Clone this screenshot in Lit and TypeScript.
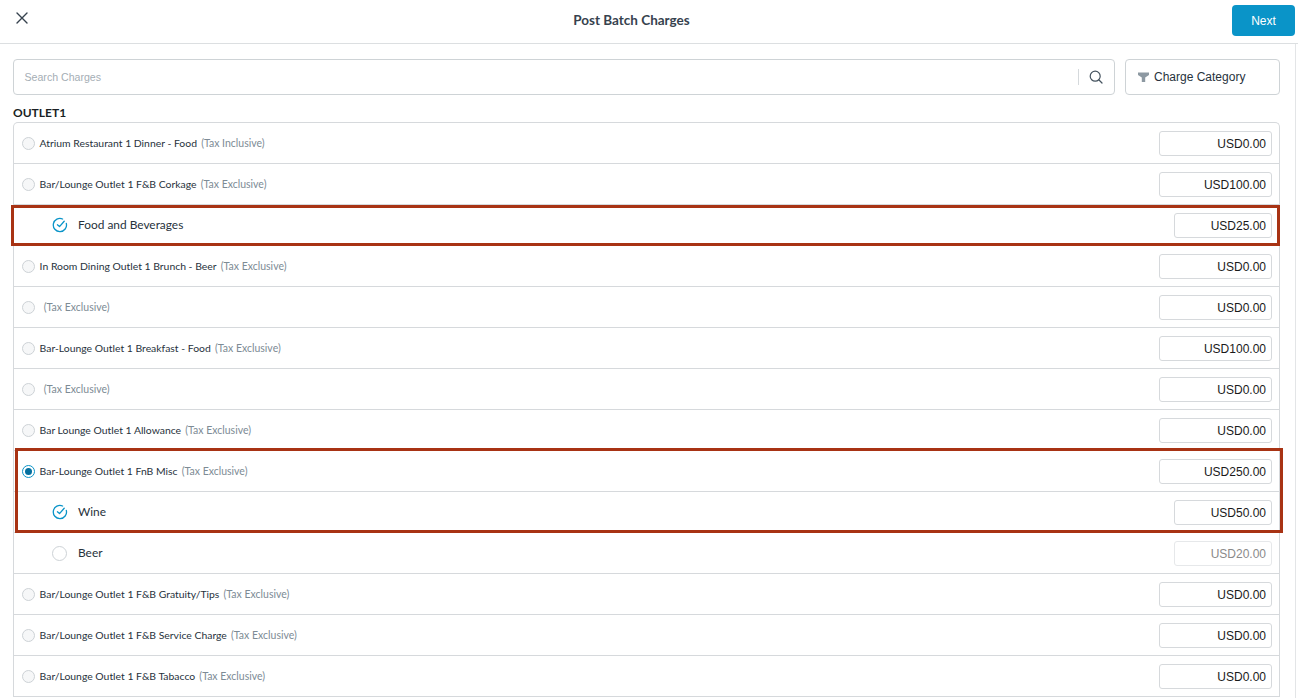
import { LitElement, html, css, svg } from "lit";
import { customElement } from "lit/decorators.js";

type Row = { name?: string; tax?: string; amt: string; kind: "main" | "sub"; state?: "on" | "check" | "off"; disabled?: boolean };
const EX = "(Tax Exclusive)";
const rows: Row[] = [
  { kind: "main", name: "Atrium Restaurant 1 Dinner - Food", tax: "(Tax Inclusive)", amt: "USD0.00" },
  { kind: "main", name: "Bar/Lounge Outlet 1 F&B Corkage", tax: EX, amt: "USD100.00" },
  { kind: "sub", name: "Food and Beverages", state: "check", amt: "USD25.00" },
  { kind: "main", name: "In Room Dining Outlet 1 Brunch - Beer", tax: EX, amt: "USD0.00" },
  { kind: "main", name: "", tax: EX, amt: "USD0.00" },
  { kind: "main", name: "Bar-Lounge Outlet 1 Breakfast - Food", tax: EX, amt: "USD100.00" },
  { kind: "main", name: "", tax: EX, amt: "USD0.00" },
  { kind: "main", name: "Bar Lounge Outlet 1 Allowance", tax: EX, amt: "USD0.00" },
  { kind: "main", name: "Bar-Lounge Outlet 1 FnB Misc", tax: EX, amt: "USD250.00", state: "on" },
  { kind: "sub", name: "Wine", state: "check", amt: "USD50.00" },
  { kind: "sub", name: "Beer", state: "off", amt: "USD20.00", disabled: true },
  { kind: "main", name: "Bar/Lounge Outlet 1 F&B Gratuity/Tips", tax: EX, amt: "USD0.00" },
  { kind: "main", name: "Bar/Lounge Outlet 1 F&B Service Charge", tax: EX, amt: "USD0.00" },
  { kind: "main", name: "Bar/Lounge Outlet 1 F&B Tabacco", tax: EX, amt: "USD0.00" },
];

const checkIcon = svg`<svg class="check" width="16" height="16" viewBox="0 0 16 16" fill="none" stroke="#0a94c8" stroke-width="1.3" stroke-linecap="round" stroke-linejoin="round"><path d="M14.3 6.4A6.6 6.6 0 1 1 10.6 2"/><path d="M5.4 7.8 7.5 9.6 12.2 4.2"/></svg>`;

@customElement("app-root")
export class AppRoot extends LitElement {
  static styles = css`
    :host { display: block; width: 1298px; height: 698px; overflow: hidden; position: relative; background: #fff; font-family: Lato, "Liberation Sans", sans-serif; color: #1d2731; }
    .header { height: 43px; border-bottom: 1px solid #dcdfe1; display: flex; align-items: center; padding: 0 3px 0 15px; }
    .close { display: flex; margin-top: -7px; }
    .title { flex: 1; text-align: center; margin-top: -3px; padding-left: 2px; font-size: 13.5px; line-height: 16px; font-weight: 700; color: #36424e; }
    .next { width: 63px; height: 31px; margin-top: -2px; background: #0a94c8; color: #fff; border: 0; border-radius: 4px; font: 12px "Liberation Sans", sans-serif; padding: 0; }
    .body { height: 654px; margin-right: 2px; border-right: 1px solid #e3e5e7; padding: 15px 15px 0 13px; box-sizing: border-box; overflow: hidden; }
    .tools { display: flex; gap: 10px; height: 36px; }
    .search { flex: 1; border: 1px solid #ced3d6; border-radius: 4px; display: flex; align-items: center; padding: 0 11px 0 10.5px; font: 10.6px "Liberation Sans", sans-serif; color: #a5aeb5; }
    .search span { flex: 1; }
    .sep { width: 1px; height: 16px; background: #d5d9dc; margin-right: 10px; }
    .search svg { display: block; }
    .filter { width: 155px; box-sizing: border-box; border: 1px solid #ced3d6; border-radius: 4px; display: flex; align-items: center; padding-left: 12px; gap: 5px; font: 12px "Liberation Sans", sans-serif; color: #27323c; }
    .group { font-size: 12px; line-height: 16px; font-weight: 700; color: #1a1f24; margin: 10px 0 1px; height: 16px; }
    .list { border: 1px solid #d6d9dc; border-bottom: 0; border-radius: 5px 5px 0 0; }
    .row { height: 40px; border-bottom: 1px solid #d6d9dc; display: flex; align-items: center; padding: 0 7px 0 8px; }
    .row.sub { padding-left: 38px; }
    .radio { width: 13px; height: 13px; box-sizing: border-box; border: 1px solid #cdd2d6; border-radius: 50%; background: #f6f7f8; flex: none; margin-right: 4.6px; display: flex; align-items: center; justify-content: center; }
    .sub .radio { width: 15px; height: 15px; background: #fff; margin-right: 11px; }
    .check { flex: none; margin-right: 10px; }
    .radio.on { border-color: #0a94c8; background: #fff; }
    .radio.on i { width: 7px; height: 7px; border-radius: 50%; background: #05709f; display: block; }
    .name { font-size: 10.4px; line-height: 14px; color: #27323c; white-space: pre; margin-top: -1px; }
    .sub .name { font-size: 11.9px; }
    .tax { font-size: 10.5px; line-height: 14px; color: #7d8b95; margin-left: 4.2px; white-space: pre; margin-top: -1px; }
    .amt { margin-left: auto; width: 113px; height: 25px; box-sizing: border-box; border: 1px solid #d6d9dc; border-radius: 3px; font: 12px/24px "Liberation Sans", sans-serif; color: #1a1a1a; text-align: right; padding-right: 5px; }
    .sub .amt { width: 98px; }
    .amt.dis { color: #8a8a8a; border-color: #e6e8ea; }
    .mark { position: absolute; box-sizing: border-box; border: 3px solid #a83314; pointer-events: none; }
    .m1 { left: 11px; top: 205px; width: 1269px; height: 41px; }
    .m2 { left: 15px; top: 448px; width: 1268px; height: 85px; }
  `;

  render() {
    return html`
      <div class="header">
        <span class="close"><svg width="14" height="14" viewBox="0 0 14 14" fill="none" stroke="#36424e" stroke-width="1.4" stroke-linecap="round"><path d="M2 2 12 12M12 2 2 12"/></svg></span>
        <div class="title">Post Batch Charges</div>
        <button class="next">Next</button>
      </div>
      <div class="body">
        <div class="tools">
          <div class="search">
            <span>Search Charges</span>
            <i class="sep"></i>
            <svg width="14" height="14" viewBox="0 0 14 14" fill="none" stroke="#45535f" stroke-width="1.2" stroke-linecap="round"><circle cx="6.2" cy="6.2" r="5"/><path d="M10 10 13 13"/></svg>
          </div>
          <div class="filter">
            <svg width="11" height="10" viewBox="0 0 11 10" fill="#8d99a2"><path d="M0 .5H11V3L7.2 5.6V10H3.8V5.6L0 3Z"/></svg>
            Charge Category
          </div>
        </div>
        <div class="group">OUTLET1</div>
        <div class="list">
          ${rows.map(
            (r) => html`<div class="row ${r.kind}">
              ${r.state === "check"
                ? checkIcon
                : html`<span class="radio ${r.state === "on" ? "on" : ""}">${r.state === "on" ? html`<i></i>` : ""}</span>`}
              <span class="name">${r.name}</span>
              ${r.tax ? html`<span class="tax">${r.tax}</span>` : ""}
              <span class="amt ${r.disabled ? "dis" : ""}">${r.amt}</span>
            </div>`
          )}
        </div>
      </div>
      <div class="mark m1"></div>
      <div class="mark m2"></div>
    `;
  }
}
